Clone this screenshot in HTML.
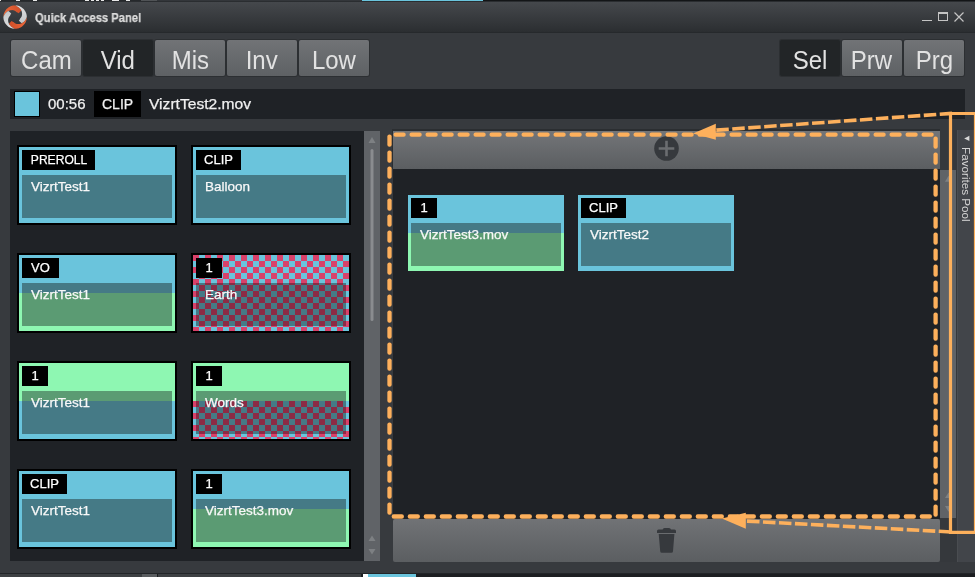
<!DOCTYPE html>
<html><head><meta charset="utf-8"><style>
*{margin:0;padding:0;box-sizing:border-box}
html,body{-webkit-text-stroke:0.25px currentColor;width:975px;height:577px;overflow:hidden;background:#373a3e;font-family:"Liberation Sans",sans-serif}
.ab{position:absolute}
div{position:absolute;-webkit-font-smoothing:antialiased}
body>div{will-change:transform}
.tb{width:160px;height:80px;background:#000}
.half{width:156px;height:38px}
.chk{background:conic-gradient(#6ac4dc 25%, #d8416a 0 50%, #6ac4dc 0 75%, #d8416a 0);background-size:12px 12px}
.ov{width:150px}
.chkd{background:conic-gradient(#457a86 25%, #8b2b45 0 50%, #457a86 0 75%, #8b2b45 0);background-size:12px 12px}
.lbl{height:20px;background:#000;color:#fff;font-size:13px;line-height:20px;text-align:center;white-space:nowrap}
.nm{font-size:13.5px;line-height:21px;white-space:nowrap;color:#f8f8f8}
.btn{top:40px;height:36px;width:70px;border-radius:2px;background:linear-gradient(#717376,#5e6164);color:#e2e2e2;-webkit-text-stroke:0;font-size:25px;line-height:40px;text-align:center;box-shadow:0 0 0 1px #2c2f32}
.btn.act{background:#222527}
</style></head><body>
<!-- top strip -->
<div style="left:0;top:0;width:975px;height:2px;background:#2a2d30"></div>
<div style="left:0;top:0;width:975px;height:1px;background:#131517"></div>
<div style="left:0;top:0;width:141px;height:1px;background:#26292c"></div>
<div style="left:157px;top:0;width:205px;height:1px;background:#33363a"></div>
<div style="left:362px;top:0;width:121px;height:1px;background:#6ac4dc"></div>
<div style="left:0px;top:0;width:1px;height:1px;background:#e8e8e8"></div><div style="left:16px;top:0;width:4px;height:1px;background:#e8e8e8"></div><div style="left:33px;top:0;width:4px;height:1px;background:#e8e8e8"></div><div style="left:85px;top:0;width:3.5px;height:1px;background:#e8e8e8"></div><div style="left:91px;top:0;width:3px;height:1px;background:#e8e8e8"></div><div style="left:95.5px;top:0;width:3.3px;height:1px;background:#e8e8e8"></div><div style="left:101px;top:0;width:3.4px;height:1px;background:#e8e8e8"></div><div style="left:112px;top:0;width:6.5px;height:1px;background:#e8e8e8"></div><div style="left:126px;top:0;width:4px;height:1px;background:#e8e8e8"></div>
<div style="left:141px;top:0;width:16px;height:1px;background:#505356"></div>
<!-- title bar -->
<div style="left:0;top:2px;width:975px;height:30px;background:linear-gradient(#45484c,#2b2e31)"></div>
<div style="left:0;top:32px;width:975px;height:1px;background:#26292c"></div>
<svg class="ab" style="left:2px;top:4px" width="27" height="27" viewBox="0 0 27 27"><defs><linearGradient id="lgo" x1="0" y1="0.6" x2="1" y2="0.5"><stop offset="0" stop-color="#ec6a3c"/><stop offset="1" stop-color="#cf4d28"/></linearGradient><linearGradient id="lgg" x1="0" y1="0.6" x2="1" y2="0.5"><stop offset="0" stop-color="#dfe0e1"/><stop offset="1" stop-color="#c4c6c8"/></linearGradient></defs><path d="M1.40,13.10 L1.44,12.08 L1.58,11.07 L1.80,10.07 L2.11,9.10 L2.50,8.16 L2.97,7.25 L3.52,6.39 L4.14,5.58 L4.83,4.83 L5.58,4.14 L6.39,3.52 L7.25,2.97 L8.16,2.50 L9.10,2.11 L10.07,1.80 L11.07,1.58 L12.08,1.44 L13.10,1.40 L14.09,1.75 L15.03,2.18 L15.89,2.69 L16.68,3.26 L17.40,3.89 L18.03,4.56 L18.58,5.27 L19.04,6.02 L19.28,6.47 L16.65,9.30 L16.58,9.24 L16.23,8.95 L15.86,8.69 L15.46,8.47 L15.05,8.28 L14.62,8.13 L14.23,7.77 L13.80,7.39 L13.31,7.05 L12.77,6.74 L12.17,6.49 L11.53,6.30 L10.85,6.17 L10.13,6.11 L9.39,6.13 L8.63,6.22 L7.86,6.39 L7.09,6.65 L6.32,6.99 L5.57,7.42 L4.84,7.94 L4.15,8.54 L3.50,9.22 L2.91,9.98 L2.38,10.82 L1.91,11.73 L1.53,12.70 L1.40,13.10Z" fill="url(#lgo)" transform="rotate(0 13.1 13.1)"/><path d="M1.40,13.10 L1.44,12.08 L1.58,11.07 L1.80,10.07 L2.11,9.10 L2.50,8.16 L2.97,7.25 L3.52,6.39 L4.14,5.58 L4.83,4.83 L5.58,4.14 L6.39,3.52 L7.25,2.97 L8.16,2.50 L9.10,2.11 L10.07,1.80 L11.07,1.58 L12.08,1.44 L13.10,1.40 L14.09,1.75 L15.03,2.18 L15.89,2.69 L16.68,3.26 L17.40,3.89 L18.03,4.56 L18.58,5.27 L19.04,6.02 L19.28,6.47 L16.65,9.30 L16.58,9.24 L16.23,8.95 L15.86,8.69 L15.46,8.47 L15.05,8.28 L14.62,8.13 L14.23,7.77 L13.80,7.39 L13.31,7.05 L12.77,6.74 L12.17,6.49 L11.53,6.30 L10.85,6.17 L10.13,6.11 L9.39,6.13 L8.63,6.22 L7.86,6.39 L7.09,6.65 L6.32,6.99 L5.57,7.42 L4.84,7.94 L4.15,8.54 L3.50,9.22 L2.91,9.98 L2.38,10.82 L1.91,11.73 L1.53,12.70 L1.40,13.10Z" fill="url(#lgg)" transform="rotate(90 13.1 13.1)"/><path d="M1.40,13.10 L1.44,12.08 L1.58,11.07 L1.80,10.07 L2.11,9.10 L2.50,8.16 L2.97,7.25 L3.52,6.39 L4.14,5.58 L4.83,4.83 L5.58,4.14 L6.39,3.52 L7.25,2.97 L8.16,2.50 L9.10,2.11 L10.07,1.80 L11.07,1.58 L12.08,1.44 L13.10,1.40 L14.09,1.75 L15.03,2.18 L15.89,2.69 L16.68,3.26 L17.40,3.89 L18.03,4.56 L18.58,5.27 L19.04,6.02 L19.28,6.47 L16.65,9.30 L16.58,9.24 L16.23,8.95 L15.86,8.69 L15.46,8.47 L15.05,8.28 L14.62,8.13 L14.23,7.77 L13.80,7.39 L13.31,7.05 L12.77,6.74 L12.17,6.49 L11.53,6.30 L10.85,6.17 L10.13,6.11 L9.39,6.13 L8.63,6.22 L7.86,6.39 L7.09,6.65 L6.32,6.99 L5.57,7.42 L4.84,7.94 L4.15,8.54 L3.50,9.22 L2.91,9.98 L2.38,10.82 L1.91,11.73 L1.53,12.70 L1.40,13.10Z" fill="url(#lgo)" transform="rotate(180 13.1 13.1)"/><path d="M1.40,13.10 L1.44,12.08 L1.58,11.07 L1.80,10.07 L2.11,9.10 L2.50,8.16 L2.97,7.25 L3.52,6.39 L4.14,5.58 L4.83,4.83 L5.58,4.14 L6.39,3.52 L7.25,2.97 L8.16,2.50 L9.10,2.11 L10.07,1.80 L11.07,1.58 L12.08,1.44 L13.10,1.40 L14.09,1.75 L15.03,2.18 L15.89,2.69 L16.68,3.26 L17.40,3.89 L18.03,4.56 L18.58,5.27 L19.04,6.02 L19.28,6.47 L16.65,9.30 L16.58,9.24 L16.23,8.95 L15.86,8.69 L15.46,8.47 L15.05,8.28 L14.62,8.13 L14.23,7.77 L13.80,7.39 L13.31,7.05 L12.77,6.74 L12.17,6.49 L11.53,6.30 L10.85,6.17 L10.13,6.11 L9.39,6.13 L8.63,6.22 L7.86,6.39 L7.09,6.65 L6.32,6.99 L5.57,7.42 L4.84,7.94 L4.15,8.54 L3.50,9.22 L2.91,9.98 L2.38,10.82 L1.91,11.73 L1.53,12.70 L1.40,13.10Z" fill="url(#lgg)" transform="rotate(270 13.1 13.1)"/></svg>
<div style="left:35px;top:10px;font-size:12px;font-weight:bold;color:#dcdcdc;line-height:16px;transform-origin:0 0;transform:scaleX(0.935);white-space:nowrap">Quick Access Panel</div>
<!-- window controls -->
<div style="left:922px;top:20px;width:10px;height:1px;background:#c4c4c4"></div>
<div style="left:938px;top:12px;width:10px;height:9px;border:1px solid #c4c4c4;border-top-width:2px"></div>
<svg class="ab" style="left:954px;top:12px" width="10" height="10"><path d="M0.5,0.5 L9.5,9.5 M9.5,0.5 L0.5,9.5" stroke="#c4c4c4" stroke-width="1.2"/></svg>
<!-- tab buttons -->
<div class="btn" style="left:11px"><span style="display:inline-block;transform:scaleX(0.96)">Cam</span></div>
<div class="btn act" style="left:83px"><span style="display:inline-block;transform:scaleX(0.96)">Vid</span></div>
<div class="btn" style="left:155px"><span style="display:inline-block;transform:scaleX(0.96)">Mis</span></div>
<div class="btn" style="left:227px"><span style="display:inline-block;transform:scaleX(0.96)">Inv</span></div>
<div class="btn" style="left:299px"><span style="display:inline-block;transform:scaleX(0.96)">Low</span></div>
<div class="btn act" style="left:780px;width:60px"><span style="display:inline-block;transform:scaleX(0.96)">Sel</span></div>
<div class="btn" style="left:842px;width:60px"><span style="display:inline-block;transform:scaleX(0.96)">Prw</span></div>
<div class="btn" style="left:904px;width:60px"><span style="display:inline-block;transform:scaleX(0.96)">Prg</span></div>
<!-- info bar -->
<div style="left:10px;top:89px;width:955px;height:30px;background:#1f2226"></div>
<div style="left:14px;top:91px;width:26px;height:26px;background:#6ac4dc;border:1px solid #000"></div>
<div style="left:48px;top:94px;font-size:15px;line-height:20px;color:#f0f0f0">00:56</div>
<div style="left:94px;top:91px;width:47px;height:26px;background:#000"></div>
<div style="left:102px;top:94px;font-size:14px;line-height:20px;color:#f0f0f0">CLIP</div>
<div style="left:149px;top:94px;font-size:15px;line-height:20px;color:#f0f0f0;transform-origin:0 0;transform:scaleX(1.04);white-space:nowrap">VizrtTest2.mov</div>
<!-- left panel -->
<div style="left:10px;top:131px;width:354px;height:430px;background:#1f2226"></div>
<div style="left:364px;top:131px;width:16px;height:430px;background:#606367"></div>
<svg class="ab" style="left:364px;top:131px" width="16" height="430">
 <polygon points="8,6 11.5,12 4.5,12" fill="#7d8083"/>
 <rect x="6.5" y="18" width="3" height="172" rx="1.5" fill="#8a8c8f"/>
 <polygon points="8,404.5 11.5,410 4.5,410" fill="#7d8083"/>
 <polygon points="8,423.5 11.5,418 4.5,418" fill="#7d8083"/>
</svg>
<!-- right panel -->
<div style="left:392px;top:129px;width:548px;height:2px;background:#2b2e31"></div>
<div style="left:392px;top:129px;width:1px;height:40px;background:#2b2e31"></div>
<div style="left:393px;top:131px;width:547px;height:38px;background:linear-gradient(#737578,#5b5e61)"></div>
<div style="left:393px;top:169px;width:547px;height:350px;background:#1f2226"></div>
<div style="left:940px;top:130px;width:17px;height:432px;background:#35383c"></div>
<div style="left:940px;top:170px;width:16px;height:348px;background:#606367"></div>
<svg class="ab" style="left:940px;top:170px" width="16" height="348">
 <polygon points="8.5,5.8 12,11.7 5,11.7" fill="#7d8083"/>
 <polygon points="8.5,322.4 12,327.9 5,327.9" fill="#7d8083"/>
 <polygon points="8.5,341.8 12,336 5,336" fill="#7d8083"/>
</svg>
<div style="left:393px;top:519px;width:547px;height:43px;border-radius:2px;background:linear-gradient(#717376,#5b5e61)"></div>
<svg class="ab" style="left:654px;top:136px" width="26" height="26"><circle cx="12.5" cy="12.5" r="12.3" fill="#36393d"/><path d="M12.5,4.7 V20.3 M4.7,12.5 H20.3" stroke="#6b6d70" stroke-width="2.6"/></svg>
<svg class="ab" style="left:656px;top:527px" width="22" height="27">
 <path d="M1,6 V4 Q1,2.5 2.5,2.5 H6.6 Q7,1 8.5,1 H13 Q14.6,1 15,2.5 H18.5 Q20,2.5 20,4 V6 Z" fill="#36393d"/>
 <path d="M2.7,7 H18.4 L17,24.2 Q16.9,25.7 15.4,25.7 H5.8 Q4.3,25.7 4.2,24.2 Z" fill="#36393d"/>
</svg>
<!-- favorites tab -->
<div style="left:957px;top:130px;width:18px;height:432px;background:#42454a;border-left:1px solid #4a4d51"></div>
<svg class="ab" style="left:962px;top:134px" width="10" height="10"><polygon points="2.2,4.4 7.4,1.8 7.4,7" fill="#d8d8d8"/></svg>
<div style="left:959px;top:147px;writing-mode:vertical-rl;font-size:11.7px;line-height:14px;color:#d4d4d4;-webkit-text-stroke:0;white-space:nowrap">Favorites Pool</div>
<div class="tb" style="left:17px;top:145px"></div>
<div class="half" style="left:19px;top:147px;background:#6ac4dc"></div>
<div class="half" style="left:19px;top:185px;background:#6ac4dc"></div>
<div class="ov" style="left:22px;top:175px;height:10px;background:#457a86"></div>
<div class="ov" style="left:22px;top:185px;height:33px;background:#457a86"></div>
<div class="lbl" style="left:22px;top:150px;width:73px"><span style="display:inline-block;transform:translateX(0.7px) scaleX(0.93)">PREROLL</span></div>
<div class="nm" style="left:31px;top:176px">VizrtTest1</div><div class="tb" style="left:191px;top:145px"></div>
<div class="half" style="left:193px;top:147px;background:#6ac4dc"></div>
<div class="half" style="left:193px;top:185px;background:#6ac4dc"></div>
<div class="ov" style="left:196px;top:175px;height:10px;background:#457a86"></div>
<div class="ov" style="left:196px;top:185px;height:33px;background:#457a86"></div>
<div class="lbl" style="left:196px;top:150px;width:45px"><span style="display:inline-block;transform:translateX(0px) scaleX(1)">CLIP</span></div>
<div class="nm" style="left:205px;top:176px">Balloon</div><div class="tb" style="left:17px;top:253px"></div>
<div class="half" style="left:19px;top:255px;background:#6ac4dc"></div>
<div class="half" style="left:19px;top:293px;background:#8ef7b2"></div>
<div class="ov" style="left:22px;top:283px;height:10px;background:#457a86"></div>
<div class="ov" style="left:22px;top:293px;height:33px;background:#5b9b73"></div>
<div class="lbl" style="left:22px;top:258px;width:37px"><span style="display:inline-block;transform:translateX(0px) scaleX(1)">VO</span></div>
<div class="nm" style="left:31px;top:284px">VizrtTest1</div><div class="tb" style="left:191px;top:253px"></div>
<div class="half chk" style="left:193px;top:255px;background-position:0px 0px"></div>
<div class="half chk" style="left:193px;top:293px;background-position:0px -38px"></div>
<div class="ov chkd" style="left:196px;top:283px;height:10px;background-position:-3px -28px"></div>
<div class="ov chkd" style="left:196px;top:293px;height:33px;background-position:-3px -38px"></div>
<div class="lbl" style="left:196px;top:258px;width:26px"><span style="display:inline-block;transform:translateX(0px) scaleX(1)">1</span></div>
<div class="nm" style="left:205px;top:284px">Earth</div><div class="tb" style="left:17px;top:361px"></div>
<div class="half" style="left:19px;top:363px;background:#8ef7b2"></div>
<div class="half" style="left:19px;top:401px;background:#6ac4dc"></div>
<div class="ov" style="left:22px;top:391px;height:10px;background:#5b9b73"></div>
<div class="ov" style="left:22px;top:401px;height:33px;background:#457a86"></div>
<div class="lbl" style="left:22px;top:366px;width:26px"><span style="display:inline-block;transform:translateX(0px) scaleX(1)">1</span></div>
<div class="nm" style="left:31px;top:392px">VizrtTest1</div><div class="tb" style="left:191px;top:361px"></div>
<div class="half" style="left:193px;top:363px;background:#8ef7b2"></div>
<div class="half chk" style="left:193px;top:401px;background-position:0px 0px"></div>
<div class="ov" style="left:196px;top:391px;height:10px;background:#5b9b73"></div>
<div class="ov chkd" style="left:196px;top:401px;height:33px;background-position:-3px 0px"></div>
<div class="lbl" style="left:196px;top:366px;width:26px"><span style="display:inline-block;transform:translateX(0px) scaleX(1)">1</span></div>
<div class="nm" style="left:205px;top:392px">Words</div><div class="tb" style="left:17px;top:469px"></div>
<div class="half" style="left:19px;top:471px;background:#6ac4dc"></div>
<div class="half" style="left:19px;top:509px;background:#6ac4dc"></div>
<div class="ov" style="left:22px;top:499px;height:10px;background:#457a86"></div>
<div class="ov" style="left:22px;top:509px;height:33px;background:#457a86"></div>
<div class="lbl" style="left:22px;top:474px;width:45px"><span style="display:inline-block;transform:translateX(0px) scaleX(1)">CLIP</span></div>
<div class="nm" style="left:31px;top:500px">VizrtTest1</div><div class="tb" style="left:191px;top:469px"></div>
<div class="half" style="left:193px;top:471px;background:#6ac4dc"></div>
<div class="half" style="left:193px;top:509px;background:#8ef7b2"></div>
<div class="ov" style="left:196px;top:499px;height:10px;background:#457a86"></div>
<div class="ov" style="left:196px;top:509px;height:33px;background:#5b9b73"></div>
<div class="lbl" style="left:196px;top:474px;width:26px"><span style="display:inline-block;transform:translateX(0px) scaleX(1)">1</span></div>
<div class="nm" style="left:205px;top:500px">VizrtTest3.mov</div><div class="half" style="left:408px;top:195px;background:#6ac4dc"></div>
<div class="half" style="left:408px;top:233px;background:#8ef7b2"></div>
<div class="ov" style="left:411px;top:223px;height:10px;background:#457a86"></div>
<div class="ov" style="left:411px;top:233px;height:33px;background:#5b9b73"></div>
<div class="lbl" style="left:411px;top:198px;width:26px"><span style="display:inline-block;transform:translateX(0px) scaleX(1)">1</span></div>
<div class="nm" style="left:420px;top:224px">VizrtTest3.mov</div><div class="half" style="left:578px;top:195px;background:#6ac4dc"></div>
<div class="half" style="left:578px;top:233px;background:#6ac4dc"></div>
<div class="ov" style="left:581px;top:223px;height:10px;background:#457a86"></div>
<div class="ov" style="left:581px;top:233px;height:33px;background:#457a86"></div>
<div class="lbl" style="left:581px;top:198px;width:45px"><span style="display:inline-block;transform:translateX(0px) scaleX(1)">CLIP</span></div>
<div class="nm" style="left:590px;top:224px">VizrtTest2</div>
<!-- bottom strip -->
<div style="left:0;top:573px;width:975px;height:1px;background:#222528"></div>
<div style="left:0;top:574px;width:975px;height:3px;background:#1c1e21"></div>
<div style="left:0;top:574px;width:142px;height:3px;background:#3d4043"></div>
<div style="left:142px;top:574px;width:15px;height:3px;background:#5a5d60"></div>
<div style="left:158px;top:574px;width:203px;height:3px;background:#3d4043"></div>
<div style="left:363px;top:574px;width:5px;height:3px;background:#fff"></div>
<div style="left:368px;top:574px;width:48px;height:3px;background:#6ac4dc"></div>
<svg class="ab" style="left:0;top:0" width="975" height="577"><g fill="#fdb05c"><rect x="393.5" y="132.45" width="12.2" height="4.3" rx="2"/><rect x="409.5" y="132.45" width="12.2" height="4.3" rx="2"/><rect x="425.5" y="132.45" width="12.2" height="4.3" rx="2"/><rect x="441.5" y="132.45" width="12.2" height="4.3" rx="2"/><rect x="457.5" y="132.45" width="12.2" height="4.3" rx="2"/><rect x="473.5" y="132.45" width="12.2" height="4.3" rx="2"/><rect x="489.5" y="132.45" width="12.2" height="4.3" rx="2"/><rect x="505.5" y="132.45" width="12.2" height="4.3" rx="2"/><rect x="521.5" y="132.45" width="12.2" height="4.3" rx="2"/><rect x="537.5" y="132.45" width="12.2" height="4.3" rx="2"/><rect x="553.5" y="132.45" width="12.2" height="4.3" rx="2"/><rect x="569.5" y="132.45" width="12.2" height="4.3" rx="2"/><rect x="585.5" y="132.45" width="12.2" height="4.3" rx="2"/><rect x="601.5" y="132.45" width="12.2" height="4.3" rx="2"/><rect x="617.5" y="132.45" width="12.2" height="4.3" rx="2"/><rect x="633.5" y="132.45" width="12.2" height="4.3" rx="2"/><rect x="649.5" y="132.45" width="12.2" height="4.3" rx="2"/><rect x="665.5" y="132.45" width="12.2" height="4.3" rx="2"/><rect x="681.5" y="132.45" width="12.2" height="4.3" rx="2"/><rect x="697.5" y="132.45" width="12.2" height="4.3" rx="2"/><rect x="713.5" y="132.45" width="12.2" height="4.3" rx="2"/><rect x="729.5" y="132.45" width="12.2" height="4.3" rx="2"/><rect x="745.5" y="132.45" width="12.2" height="4.3" rx="2"/><rect x="761.5" y="132.45" width="12.2" height="4.3" rx="2"/><rect x="777.5" y="132.45" width="12.2" height="4.3" rx="2"/><rect x="793.5" y="132.45" width="12.2" height="4.3" rx="2"/><rect x="809.5" y="132.45" width="12.2" height="4.3" rx="2"/><rect x="825.5" y="132.45" width="12.2" height="4.3" rx="2"/><rect x="841.5" y="132.45" width="12.2" height="4.3" rx="2"/><rect x="857.5" y="132.45" width="12.2" height="4.3" rx="2"/><rect x="873.5" y="132.45" width="12.2" height="4.3" rx="2"/><rect x="889.5" y="132.45" width="12.2" height="4.3" rx="2"/><rect x="905.5" y="132.45" width="12.2" height="4.3" rx="2"/><rect x="921.5" y="132.45" width="12.2" height="4.3" rx="2"/><rect x="933.45" y="136.6" width="4.3" height="12.2" rx="2"/><rect x="933.45" y="152.6" width="4.3" height="12.2" rx="2"/><rect x="933.45" y="168.6" width="4.3" height="12.2" rx="2"/><rect x="933.45" y="184.6" width="4.3" height="12.2" rx="2"/><rect x="933.45" y="200.6" width="4.3" height="12.2" rx="2"/><rect x="933.45" y="216.6" width="4.3" height="12.2" rx="2"/><rect x="933.45" y="232.6" width="4.3" height="12.2" rx="2"/><rect x="933.45" y="248.6" width="4.3" height="12.2" rx="2"/><rect x="933.45" y="264.6" width="4.3" height="12.2" rx="2"/><rect x="933.45" y="280.6" width="4.3" height="12.2" rx="2"/><rect x="933.45" y="296.6" width="4.3" height="12.2" rx="2"/><rect x="933.45" y="312.6" width="4.3" height="12.2" rx="2"/><rect x="933.45" y="328.6" width="4.3" height="12.2" rx="2"/><rect x="933.45" y="344.6" width="4.3" height="12.2" rx="2"/><rect x="933.45" y="360.6" width="4.3" height="12.2" rx="2"/><rect x="933.45" y="376.6" width="4.3" height="12.2" rx="2"/><rect x="933.45" y="392.6" width="4.3" height="12.2" rx="2"/><rect x="933.45" y="408.6" width="4.3" height="12.2" rx="2"/><rect x="933.45" y="424.6" width="4.3" height="12.2" rx="2"/><rect x="933.45" y="440.6" width="4.3" height="12.2" rx="2"/><rect x="933.45" y="456.6" width="4.3" height="12.2" rx="2"/><rect x="933.45" y="472.6" width="4.3" height="12.2" rx="2"/><rect x="933.45" y="488.6" width="4.3" height="12.2" rx="2"/><rect x="933.45" y="504.6" width="4.3" height="12.2" rx="2"/><rect x="391.7" y="514.35" width="12.2" height="4.3" rx="2"/><rect x="407.7" y="514.35" width="12.2" height="4.3" rx="2"/><rect x="423.7" y="514.35" width="12.2" height="4.3" rx="2"/><rect x="439.7" y="514.35" width="12.2" height="4.3" rx="2"/><rect x="455.7" y="514.35" width="12.2" height="4.3" rx="2"/><rect x="471.7" y="514.35" width="12.2" height="4.3" rx="2"/><rect x="487.7" y="514.35" width="12.2" height="4.3" rx="2"/><rect x="503.7" y="514.35" width="12.2" height="4.3" rx="2"/><rect x="519.7" y="514.35" width="12.2" height="4.3" rx="2"/><rect x="535.7" y="514.35" width="12.2" height="4.3" rx="2"/><rect x="551.7" y="514.35" width="12.2" height="4.3" rx="2"/><rect x="567.7" y="514.35" width="12.2" height="4.3" rx="2"/><rect x="583.7" y="514.35" width="12.2" height="4.3" rx="2"/><rect x="599.7" y="514.35" width="12.2" height="4.3" rx="2"/><rect x="615.7" y="514.35" width="12.2" height="4.3" rx="2"/><rect x="631.7" y="514.35" width="12.2" height="4.3" rx="2"/><rect x="647.7" y="514.35" width="12.2" height="4.3" rx="2"/><rect x="663.7" y="514.35" width="12.2" height="4.3" rx="2"/><rect x="679.7" y="514.35" width="12.2" height="4.3" rx="2"/><rect x="695.7" y="514.35" width="12.2" height="4.3" rx="2"/><rect x="711.7" y="514.35" width="12.2" height="4.3" rx="2"/><rect x="727.7" y="514.35" width="12.2" height="4.3" rx="2"/><rect x="743.7" y="514.35" width="12.2" height="4.3" rx="2"/><rect x="759.7" y="514.35" width="12.2" height="4.3" rx="2"/><rect x="775.7" y="514.35" width="12.2" height="4.3" rx="2"/><rect x="791.7" y="514.35" width="12.2" height="4.3" rx="2"/><rect x="807.7" y="514.35" width="12.2" height="4.3" rx="2"/><rect x="823.7" y="514.35" width="12.2" height="4.3" rx="2"/><rect x="839.7" y="514.35" width="12.2" height="4.3" rx="2"/><rect x="855.7" y="514.35" width="12.2" height="4.3" rx="2"/><rect x="871.7" y="514.35" width="12.2" height="4.3" rx="2"/><rect x="887.7" y="514.35" width="12.2" height="4.3" rx="2"/><rect x="903.7" y="514.35" width="12.2" height="4.3" rx="2"/><rect x="919.7" y="514.35" width="12.2" height="4.3" rx="2"/><rect x="387.35" y="134.6" width="4.3" height="12.2" rx="2"/><rect x="387.35" y="150.6" width="4.3" height="12.2" rx="2"/><rect x="387.35" y="166.6" width="4.3" height="12.2" rx="2"/><rect x="387.35" y="182.6" width="4.3" height="12.2" rx="2"/><rect x="387.35" y="198.6" width="4.3" height="12.2" rx="2"/><rect x="387.35" y="214.6" width="4.3" height="12.2" rx="2"/><rect x="387.35" y="230.6" width="4.3" height="12.2" rx="2"/><rect x="387.35" y="246.6" width="4.3" height="12.2" rx="2"/><rect x="387.35" y="262.6" width="4.3" height="12.2" rx="2"/><rect x="387.35" y="278.6" width="4.3" height="12.2" rx="2"/><rect x="387.35" y="294.6" width="4.3" height="12.2" rx="2"/><rect x="387.35" y="310.6" width="4.3" height="12.2" rx="2"/><rect x="387.35" y="326.6" width="4.3" height="12.2" rx="2"/><rect x="387.35" y="342.6" width="4.3" height="12.2" rx="2"/><rect x="387.35" y="358.6" width="4.3" height="12.2" rx="2"/><rect x="387.35" y="374.6" width="4.3" height="12.2" rx="2"/><rect x="387.35" y="390.6" width="4.3" height="12.2" rx="2"/><rect x="387.35" y="406.6" width="4.3" height="12.2" rx="2"/><rect x="387.35" y="422.6" width="4.3" height="12.2" rx="2"/><rect x="387.35" y="438.6" width="4.3" height="12.2" rx="2"/><rect x="387.35" y="454.6" width="4.3" height="12.2" rx="2"/><rect x="387.35" y="470.6" width="4.3" height="12.2" rx="2"/><rect x="387.35" y="486.6" width="4.3" height="12.2" rx="2"/><rect x="387.35" y="502.6" width="4.3" height="12.2" rx="2"/></g><g stroke="#fdb05c" stroke-width="3.6" fill="none" stroke-dasharray="12.5 3.5"><line x1="716.3" y1="130.1" x2="952" y2="113.4"/><line x1="747" y1="521.1" x2="952" y2="532"/></g><polygon fill="#fdb05c" points="693,133.4 715.8,123.8 715.8,139.7"/><polygon fill="#fdb05c" points="721.8,518.5 745.8,512.8 745.8,528.7"/><path d="M976,113.5 H950.5 V532.3 H976" stroke="#fdb05c" stroke-width="3.2" fill="none"/><line x1="975.4" y1="113" x2="975.4" y2="533" stroke="#fdb05c" stroke-width="3"/></svg>
</body></html>
